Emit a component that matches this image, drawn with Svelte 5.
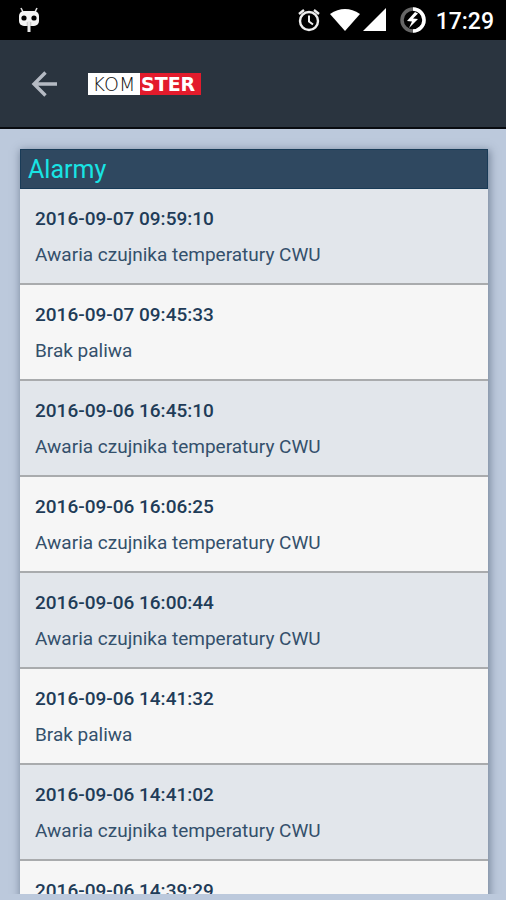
<script>
  const fault = "Awaria czujnika temperatury CWU";
  const fuel = "Brak paliwa";

  const alarms = [
    { date: "2016-09-07 09:59:10", text: fault },
    { date: "2016-09-07 09:45:33", text: fuel },
    { date: "2016-09-06 16:45:10", text: fault },
    { date: "2016-09-06 16:06:25", text: fault },
    { date: "2016-09-06 16:00:44", text: fault },
    { date: "2016-09-06 14:41:32", text: fuel },
    { date: "2016-09-06 14:41:02", text: fault },
    { date: "2016-09-06 14:39:29", text: fault }
  ];
</script>

<div class="screen">
  <div class="status">
    <svg class="cid" width="22" height="28" viewBox="0 0 22 28">
      <path d="M3 2l2 4M19 2l-2 4" stroke="#ddd" stroke-width="1.6" />
      <rect x="1" y="5" width="20" height="15" rx="5" fill="#f4f4f4" />
      <circle cx="6" cy="12" r="2.6" fill="#000" />
      <circle cx="16" cy="12" r="2.6" fill="#000" />
      <path d="M11 16v10" stroke="#000" stroke-width="4.4" opacity=".25" />
      <path d="M11 15v11" stroke="#e8e8e8" stroke-width="3" />
    </svg>
    <div class="icons">
      <svg width="24" height="26" viewBox="0 0 24 26" fill="none" stroke="#eee">
        <circle cx="12" cy="14" r="9" stroke-width="2.4" />
        <path d="M12 8.500v6l4 3" stroke-width="2" />
        <path d="M2 7l5-4M22 7l-5-4" stroke-width="2.4" />
      </svg>
      <svg class="wifi" width="32" height="24" viewBox="0 0 32 24">
        <path d="M1 6Q16-4 31 6L16 23z" fill="#fff" />
      </svg>
      <svg class="cell" width="24" height="24" viewBox="0 0 24 24">
        <path d="M0 23L23 0v23z" fill="#fff" />
      </svg>
      <svg class="battery" width="28" height="28" viewBox="0 0 28 28" fill="none">
        <circle cx="14" cy="14" r="11" stroke="#666" stroke-width="3.500" />
        <path d="M14 3a11 11 0 0 1 0 22" stroke="#fff" stroke-width="3.500" />
        <path d="M16 6L8 15l5 .5L10 22l9-9-5-.5 5-5z" fill="#fff" />
      </svg>
      <span class="clock">17:29</span>
    </div>
  </div>

  <header>
    <button class="back" aria-label="Wstecz">
      <svg width="28" height="26" viewBox="0 0 28 26" fill="none" stroke="#b5bac3" stroke-width="3.4">
        <path d="M26 13H4M14.500 1.500L3 13l11.500 11.500" />
      </svg>
    </button>
    <div class="logo"><span class="kom">KOM</span><span class="ster">STER</span></div>
  </header>

  <main>
    <section class="card">
      <h1>Alarmy</h1>
      <ul>
        {#each alarms as alarm}
          <li>
            <p class="date">{alarm.date}</p>
            <p class="text">{alarm.text}</p>
          </li>
        {/each}
      </ul>
    </section>
  </main>
</div>

<style>
  :global(body) {
    background: #bcc9dc;
  }

  .screen {
    display: flex;
    flex-direction: column;
    height: 100vh;
    font-family: Roboto, sans-serif;
    color: #34506b;
  }

  .status {
    display: flex;
    flex: none;
    justify-content: space-between;
    align-items: center;
    height: 40px;
    padding: 0 12px 0 18px;
    background: #000;
  }

  .icons {
    display: flex;
    align-items: center;
  }

  .wifi {
    margin-left: 8px;
  }

  .cell {
    margin-left: 2px;
  }

  .battery {
    margin-left: 12px;
  }

  .clock {
    margin-left: 9px;
    padding-top: 3px;
    font-size: 23px;
    font-weight: 500;
    line-height: 37px;
    color: #fff;
  }

  header {
    display: flex;
    flex: none;
    align-items: center;
    height: 87px;
    padding: 0 31px;
    background: #2a343f;
    border-bottom: 2px solid #080b10;
  }

  .back {
    display: flex;
    margin-right: 29px;
    padding: 0;
    border: 0;
    background: none;
  }

  .logo {
    display: flex;
    font-family: "DejaVu Sans", sans-serif;
    font-size: 19px;
    line-height: 22px;
  }

  .kom {
    width: 52px;
    text-align: center;
    font-weight: 200;
    background: #fff;
    color: #111;
  }

  .ster {
    width: 60px;
    padding-left: 1px;
    font-weight: 700;
    background: #e31b2c;
    color: #fff;
  }

  main {
    flex: 1;
    min-height: 0;
    margin-bottom: 6px;
    padding: 20px 18px 0 20px;
    overflow: hidden;
  }

  .card {
    box-shadow: 1px 2px 8px 1px rgba(50, 65, 90, 0.5);
  }

  h1 {
    margin: 0;
    padding: 2px 7px 0;
    font-size: 25px;
    font-weight: 400;
    line-height: 36px;
    border: 1px solid #193b57;
    background: #2f4860;
    color: #18e4e4;
  }

  ul {
    margin: 0;
    padding: 0;
    list-style: none;
  }

  li {
    padding: 12px 15px 10px;
    border-bottom: 2px solid #a9abad;
    background: #e2e6eb;
  }

  li:nth-child(even) {
    background: #f6f6f6;
  }

  p {
    margin: 0;
    font-size: 19px;
    line-height: 36px;
  }

  .date {
    font-weight: 500;
    color: #1f3c58;
  }
</style>
